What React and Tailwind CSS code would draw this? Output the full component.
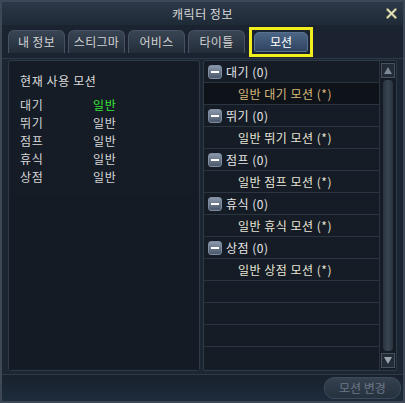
import { useState } from 'react';

const tabs = ['내 정보', '스티그마', '어비스', '타이틀', '모션'];

const current = [
    { label: '대기', value: '일반', active: true },
    { label: '뛰기', value: '일반' },
    { label: '점프', value: '일반' },
    { label: '휴식', value: '일반' },
    { label: '상점', value: '일반' },
];

const groups = [
    { name: '대기', item: '일반 대기 모션 (*)' },
    { name: '뛰기', item: '일반 뛰기 모션 (*)' },
    { name: '점프', item: '일반 점프 모션 (*)' },
    { name: '휴식', item: '일반 휴식 모션 (*)' },
    { name: '상점', item: '일반 상점 모션 (*)' },
];

const MinusBox = () => (
    <span className="w-[14px] h-[14px] rounded-[3px] border border-[#7d8ca0] bg-gradient-to-b from-[#8a98aa] to-[#4a586a] flex items-center justify-center">
        <span className="w-[8px] h-[2px] bg-white" />
    </span>
);

export default function App() {
    const [tab] = useState(4);

    return (
        <div
            className="w-[405px] h-[403px] bg-[#1c2532] border-2 border-[#3d4756] flex flex-col overflow-hidden text-[12px] text-[#d6d6d6]"
            style={{ fontFamily: '"Noto Sans CJK KR", "Noto Sans", sans-serif' }}
        >
            {/* title bar */}
            <div className="relative h-[23px] shrink-0 flex items-center justify-center bg-gradient-to-b from-[#2c3848] to-[#1f2a37] text-[#d8d8d8] tracking-[0.5px]">
                캐릭터 정보
                <svg className="absolute right-[6px] top-[6px]" width="11" height="11" viewBox="0 0 11 11">
                    <path d="M1.5 1.5 L9.5 9.5 M9.5 1.5 L1.5 9.5" stroke="#c8c87a" strokeWidth="3" strokeLinecap="round" opacity="0.5" />
                    <path d="M1.5 1.5 L9.5 9.5 M9.5 1.5 L1.5 9.5" stroke="#f8f6d0" strokeWidth="1.2" strokeLinecap="round" />
                </svg>
            </div>

            {/* tabs */}
            <div className="h-[34px] shrink-0 flex items-center gap-[3px] px-[6px] bg-[#1a232f] border-b border-[#2e3946]">
                {tabs.map((t, i) =>
                    i === tab ? (
                        <div key={t} className="ml-[1px] border-[3px] border-[#f2ee1e] p-[2px] h-[30px] flex">
                            <div className="w-[54px] rounded-t-[5px] rounded-b-[2px] bg-gradient-to-b from-[#4c6584] to-[#2f4562] border border-[#5a7090] flex items-center justify-center text-white">
                                {t}
                            </div>
                        </div>
                    ) : (
                        <div
                            key={t}
                            className="w-[57px] h-[23px] rounded-t-[6px] bg-gradient-to-b from-[#3a4554] to-[#232d3a] border border-[#465264] border-b-0 flex items-center justify-center text-[#d2d2d2] tracking-[0.3px]"
                        >
                            {t}
                        </div>
                    )
                )}
            </div>

            {/* content */}
            <div className="flex gap-[3px] px-[6px] pt-[1px] h-[312px] shrink-0">
                {/* left panel */}
                <div className="w-[192px] border border-[#2f3a48] rounded-[3px] bg-[#151c26] flex flex-col">
                    <div className="px-[11px] pt-[11px] pb-[6px] h-[134px] tracking-[0.6px]">
                        <div className="mb-[6px] text-[#dcdcdc]">현재 사용 모션</div>
                        {current.map((c) => (
                            <div key={c.label} className="flex h-[18px] items-center">
                                <span className="w-[73px]">{c.label}</span>
                                <span className={c.active ? 'text-[#36e436]' : ''}>{c.value}</span>
                            </div>
                        ))}
                    </div>
                    <div className="flex-1 bg-[#141b24]" />
                </div>

                {/* right panel */}
                <div className="flex-1 border border-[#2f3a48] rounded-[2px] bg-[#151c26] flex">
                    <div className="flex-1 flex flex-col tracking-[0.5px]">
                        {groups.map((g, i) => (
                            <div key={g.name}>
                                <div className="h-[22px] flex items-center gap-[4px] pl-[4px] border-b border-[#2b3542] text-[#e6e6e6]">
                                    <MinusBox />
                                    <span>{g.name} (0)</span>
                                </div>
                                <div
                                    className={`h-[22px] flex items-center pl-[34px] border-b border-[#2b3542] ${
                                        i === 0 ? 'bg-[#0e131a] text-[#d9b97a]' : 'text-[#e8e4d4]'
                                    }`}
                                >
                                    {g.item}
                                </div>
                            </div>
                        ))}
                        {[0, 1, 2, 3].map((n) => (
                            <div key={n} className="h-[22px] border-b border-[#2b3542] last:border-b-0" />
                        ))}
                    </div>
                    {/* scrollbar */}
                    <div className="w-[17px] border-l border-[#2b3542] flex flex-col items-center py-[2px] gap-[2px]">
                        <div className="w-[14px] h-[15px] border border-[#47525f] bg-[#222b36] flex items-center justify-center">
                            <svg width="8" height="7" viewBox="0 0 8 7"><path d="M4 0 L8 7 L0 7 Z" fill="#7d8896" /></svg>
                        </div>
                        <div className="flex-1 w-[10px] rounded-[4px] bg-gradient-to-r from-[#2a3440] via-[#3a4552] to-[#2a3440]" />
                        <div className="w-[14px] h-[15px] border border-[#47525f] bg-[#222b36] flex items-center justify-center">
                            <svg width="8" height="7" viewBox="0 0 8 7"><path d="M0 0 L8 0 L4 7 Z" fill="#9aa4b0" /></svg>
                        </div>
                    </div>
                </div>
            </div>

            {/* bottom bar */}
            <div className="flex-1 mt-[3px] border-t border-[#2e3946] bg-gradient-to-b from-[#18212c] to-[#1e2c3c] flex items-center justify-end pr-[2px]">
                <div className="w-[77px] h-[22px] rounded-[10px] border border-[#3c4a5a] bg-gradient-to-b from-[#35414f] to-[#26313e] flex items-center justify-center text-[#6b7684]">
                    모션 변경
                </div>
            </div>
        </div>
    );
}
